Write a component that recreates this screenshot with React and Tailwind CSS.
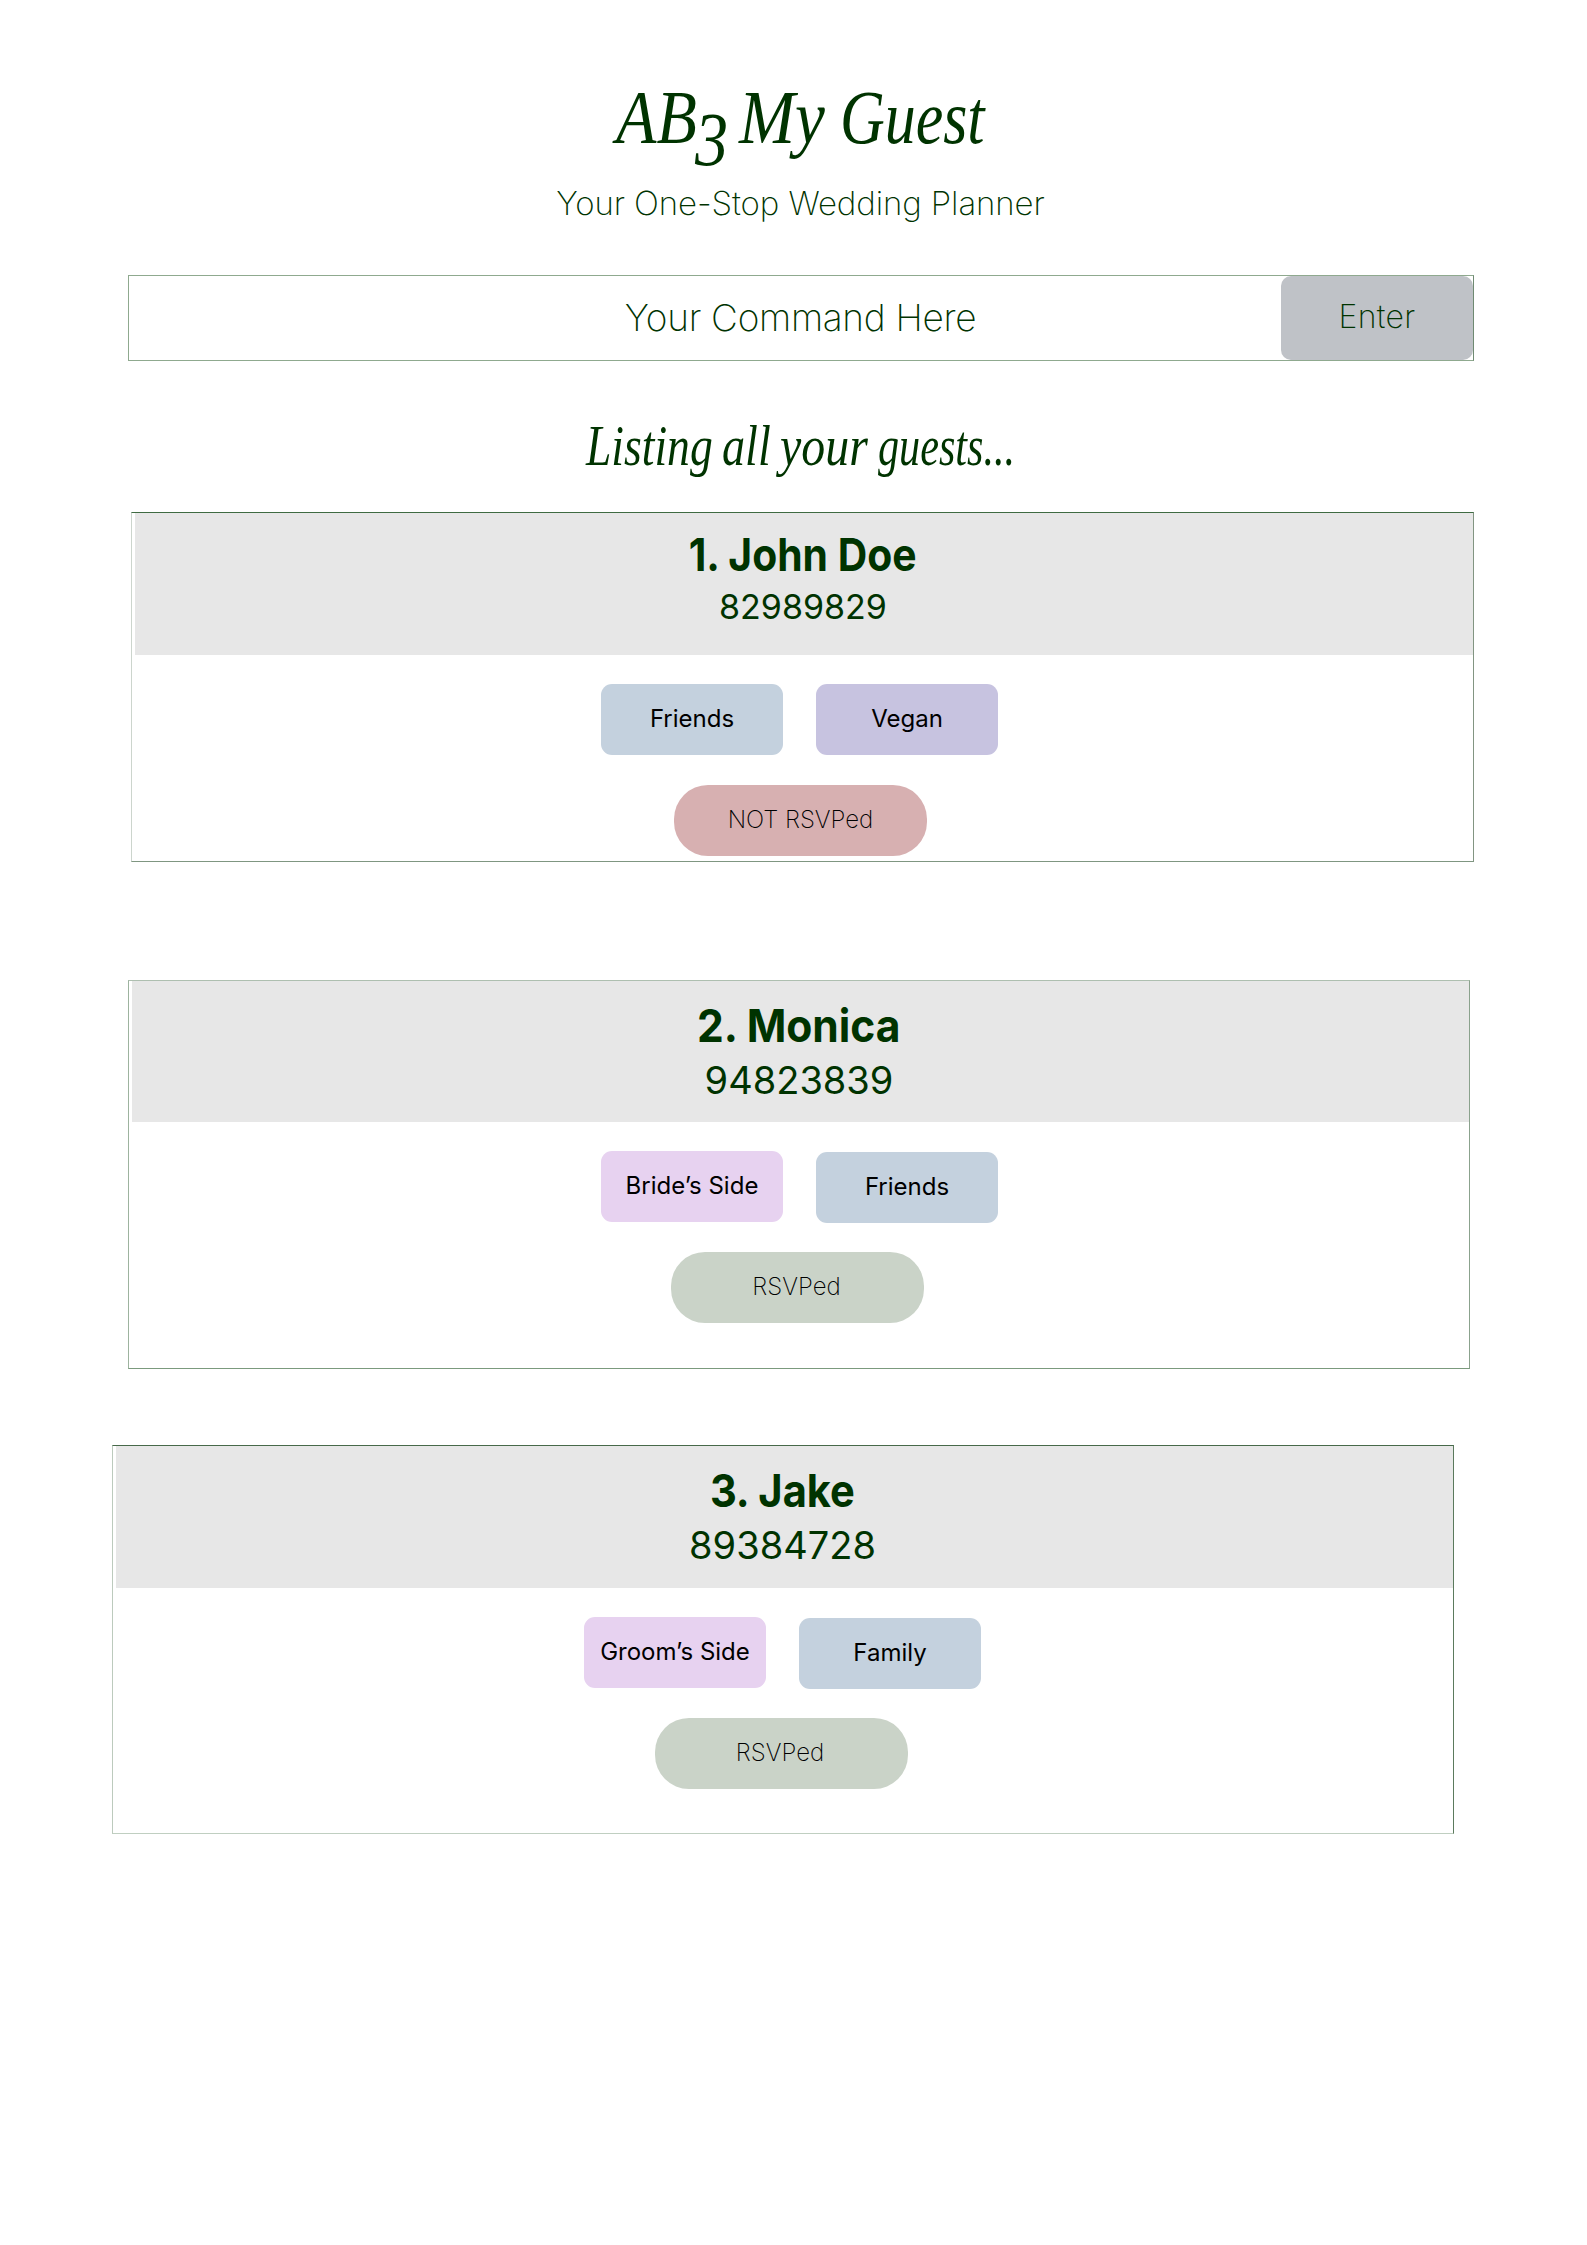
import React from "react";

const chipColors = {
  blue: "bg-[#c4d1de]",
  violet: "bg-[#c7c3e0]",
  pink: "bg-[#e7d2f0]",
};

const guests = [
  {
    name: "1. John Doe",
    phone: "82989829",
    card: "ml-[131px] mt-[38px] w-[1343px] h-[350px] border-t-[#3f6b42] border-r-[#829582] border-b-[#7f9681] border-l-[#ccd5cd]",
    header: "ml-[3px] h-[142px] pt-[19px] pr-[2px]",
    nameStyle: "scale-x-[0.907]",
    phoneStyle: "mt-[13px] text-[34px]",
    chipsStyle: "pl-[469px]",
    chips: [
      { label: "Friends", color: "blue" },
      { label: "Vegan", color: "violet" },
    ],
    status: "NOT RSVPed",
    pill: "ml-[542px] mt-[30px] bg-[#d7b0b1]",
  },
  {
    name: "2. Monica",
    phone: "94823839",
    card: "ml-[128px] mt-[118px] w-[1342px] h-[389px] border-t-[#aebfb0] border-r-[#8ba28d] border-b-[#7b9a7d] border-l-[#9db39f]",
    header: "ml-[3px] h-[141px] pt-[22px] pr-[3px]",
    nameStyle: "scale-x-[0.945]",
    phoneStyle: "mt-[13px] text-[38px]",
    chipsStyle: "pl-[472px]",
    chips: [
      { label: "Bride’s Side", color: "pink" },
      { label: "Friends", color: "blue", drop: true },
    ],
    status: "RSVPed",
    pill: "ml-[542px] mt-[29px] pr-[2px] bg-[#cad3c8]",
  },
  {
    name: "3. Jake",
    phone: "89384728",
    card: "ml-[112px] mt-[76px] w-[1342px] h-[389px] border-t-[#47694a] border-r-[#5b7a5d] border-b-[#c0cfc1] border-l-[#bccabd]",
    header: "ml-[3px] h-[142px] pt-[22px] pr-[4px]",
    nameStyle: "scale-x-[0.925]",
    phoneStyle: "mt-[13px] text-[38px]",
    chipsStyle: "pl-[471px]",
    chips: [
      { label: "Groom’s Side", color: "pink" },
      { label: "Family", color: "blue", drop: true },
    ],
    status: "RSVPed",
    pill: "ml-[541.5px] mt-[29px] pr-[2px] bg-[#cad3c8]",
  },
];

function Chip({ label, color, drop }) {
  return (
    <div
      className={`flex h-[71px] w-[182px] items-center justify-center rounded-[11px] pb-px text-2xl leading-none text-black ${chipColors[color]} ${drop ? "mt-px" : ""}`}
    >
      {label}
    </div>
  );
}

function GuestCard({ guest }) {
  return (
    <section className={`shrink-0 border ${guest.card}`}>
      <header className={`flex flex-col items-center bg-[#e7e7e7] ${guest.header}`}>
        <h2 className={`text-[45px] leading-none font-bold ${guest.nameStyle}`}>{guest.name}</h2>
        <p className={`leading-none ${guest.phoneStyle}`}>{guest.phone}</p>
      </header>
      <div className={`mt-[29px] flex items-start gap-[33px] ${guest.chipsStyle}`}>
        {guest.chips.map((chip) => (
          <Chip key={chip.label} {...chip} />
        ))}
      </div>
      <div
        className={`flex h-[71px] w-[253px] items-center justify-center rounded-[34px] pb-px text-2xl leading-none font-extralight text-black ${guest.pill}`}
      >
        {guest.status}
      </div>
    </section>
  );
}

export default function App() {
  return (
    <main className="flex h-[2245px] w-[1587px] flex-col overflow-hidden bg-white font-['Inter',sans-serif] whitespace-nowrap text-[#003300]">
      <h1 className="mt-[79px] flex h-[76px] pl-[616px] font-['Liberation_Serif',serif] text-[76px] leading-none italic">
        <span className="w-[123px] origin-left scale-x-[0.87]">
          AB<span className="relative top-[22px] -ml-[2px]">3</span>
        </span>
        <span className="w-[101px] origin-left scale-x-[0.885]">My</span>
        <span className="origin-left scale-x-[0.815]">Guest</span>
      </h1>
      <p className="mt-8 flex h-[33px] justify-center pl-[14px] text-[33px] leading-none font-extralight tracking-[-0.1px]">
        Your One-Stop Wedding Planner
      </p>

      <div className="mt-[55px] ml-[128px] flex h-[86px] w-[1346px] shrink-0 border border-[#8fa98f] border-r-[#6f8a72]">
        <div className="flex flex-1 items-center justify-center pb-px pl-[191px] text-[37px] leading-none font-extralight tracking-[-0.3px]">
          Your Command Here
        </div>
        <button className="flex h-[84px] w-[192px] items-center justify-center rounded-[10px] bg-[#bfc2c7] pb-[2px] text-[32px] leading-none font-extralight tracking-[0.3px]">
          Enter
        </button>
      </div>

      <h2 className="mt-[56px] flex h-[57px] shrink-0 pl-[586px] font-['Liberation_Serif',serif] text-[57px] leading-none italic">
        <span className="w-[136px] origin-left scale-x-[0.8]">Listing</span>
        <span className="w-[58px] origin-left scale-x-[0.81]">all</span>
        <span className="w-[98px] origin-left scale-x-[0.84]">your</span>
        <span className="origin-left scale-x-[0.74]">guests...</span>
      </h2>

      {guests.map((guest) => (
        <GuestCard key={guest.name} guest={guest} />
      ))}
    </main>
  );
}
